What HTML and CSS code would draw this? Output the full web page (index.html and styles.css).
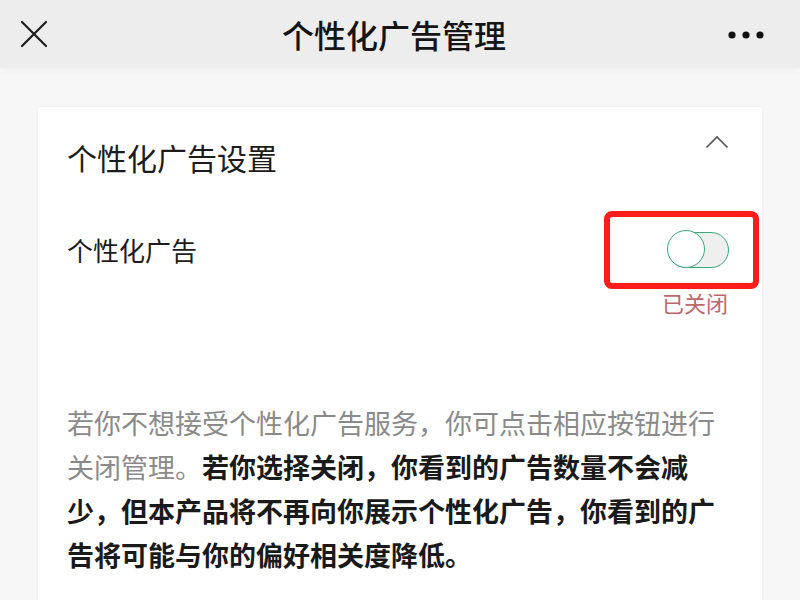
FILE: index.html
```html
<!DOCTYPE html>
<html lang="zh-CN">
<head>
<meta charset="utf-8">
<title>个性化广告管理</title>
<link rel="stylesheet" href="styles.css">
</head>
<body>
<header class="topbar">
  <div class="topbar-left">
    <svg class="icon-close" width="28" height="28" viewBox="0 0 28 28" aria-hidden="true">
      <path d="M2 2 L26 26 M26 2 L2 26" stroke="#1e1e1e" stroke-width="2.2" stroke-linecap="round" fill="none"/>
    </svg>
  </div>
  <h1 class="topbar-title">个性化广告管理</h1>
  <div class="topbar-right">
    <svg class="icon-more" width="36" height="10" viewBox="0 0 36 10" aria-hidden="true">
      <circle cx="4" cy="5" r="3.6" fill="#111"/>
      <circle cx="18" cy="5" r="3.6" fill="#111"/>
      <circle cx="32" cy="5" r="3.6" fill="#111"/>
    </svg>
  </div>
</header>
<main class="content">
  <section class="card">
    <div class="card-head">
      <h2 class="card-title">个性化广告设置</h2>
      <svg class="icon-chevron" width="24" height="14" viewBox="0 0 24 14" aria-hidden="true">
        <path d="M1.5 12.5 L12 2 L22.5 12.5" stroke="#555" stroke-width="1.6" fill="none"/>
      </svg>
    </div>
    <div class="setting-row">
      <div class="setting-label">个性化广告</div>
      <div class="setting-control">
        <div class="toggle-wrap">
          <div class="toggle">
            <span class="toggle-knob"></span>
          </div>
          <span class="highlight-frame"></span>
        </div>
        <div class="toggle-status">已关闭</div>
      </div>
    </div>
    <p class="desc">若你不想接受个性化广告服务，你可点击相应按钮进行关闭管理。<strong>若你选择关闭，你看到的广告数量不会减少，但本产品将不再向你展示个性化广告，你看到的广告将可能与你的偏好相关度降低。</strong></p>
  </section>
</main>
</body>
</html>
```

FILE: styles.css
```css
* { box-sizing: border-box; }

html, body {
  margin: 0;
  padding: 0;
  height: 100%;
  overflow: hidden;
}

body {
  background: #f7f7f7;
  font-family: "Noto Sans CJK SC", "Noto Sans", sans-serif;
  color: #1a1a1a;
}

.topbar {
  height: 68px;
  background: #ededed;
  display: grid;
  grid-template-columns: 1fr auto 1fr;
  align-items: center;
  box-shadow: 0 3px 6px rgba(0, 0, 0, 0.03);
  position: relative;
}

.topbar-left {
  padding-left: 20px;
  display: flex;
  align-items: center;
}

.icon-close { display: block; }

.topbar-title {
  margin: 0 12px 0 0;
  font-size: 32px;
  font-weight: 500;
  line-height: 40px;
  color: #151515;
}

.topbar-right {
  display: flex;
  justify-content: flex-end;
  padding-right: 36px;
  padding-top: 1px;
}

.icon-more { display: block; }

.content {
  padding: 39px 38px 0 38px;
}

.card {
  background: #fff;
  padding: 30px 31px 80px 29px;
  box-shadow: 0 0 2px rgba(0, 0, 0, 0.07);
  min-height: 600px;
}

.card-head {
  display: flex;
  justify-content: space-between;
  align-items: flex-start;
}

.card-title {
  margin: 0;
  font-size: 30px;
  font-weight: 400;
  line-height: 40px;
  color: #1c1c1c;
}

.icon-chevron {
  display: block;
  margin-top: -2px;
  margin-right: 2px;
}

.setting-row {
  margin-top: 55px;
  display: flex;
  justify-content: space-between;
  align-items: flex-start;
}

.setting-label {
  font-size: 26px;
  line-height: 35px;
  color: #1c1c1c;
}

.setting-control {
  display: flex;
  flex-direction: column;
  align-items: flex-end;
}

.toggle-wrap {
  position: relative;
  margin-right: 2px;
}

.toggle {
  width: 61px;
  height: 36px;
  border: 1.6px solid #38a978;
  border-radius: 18px;
  background: #efefef;
  position: relative;
}

.toggle-knob {
  position: absolute;
  left: -2px;
  top: -2.6px;
  width: 38px;
  height: 38px;
  border-radius: 50%;
  background: #fff;
  border: 1.6px solid #38a978;
}

.highlight-frame {
  position: absolute;
  left: -64px;
  top: -21px;
  width: 155px;
  height: 78px;
  border: 6px solid #ff1c1c;
  border-radius: 8px;
}

.toggle-status {
  margin-top: 21px;
  margin-right: 3px;
  font-size: 22px;
  line-height: 26px;
  color: #c0666b;
}

.desc {
  margin: 86px 0 0 0;
  font-size: 27px;
  line-height: 44px;
  color: #8a8a8a;
  max-width: 666px;
}

.desc strong {
  color: #1a1a1a;
  font-weight: 700;
}
```
